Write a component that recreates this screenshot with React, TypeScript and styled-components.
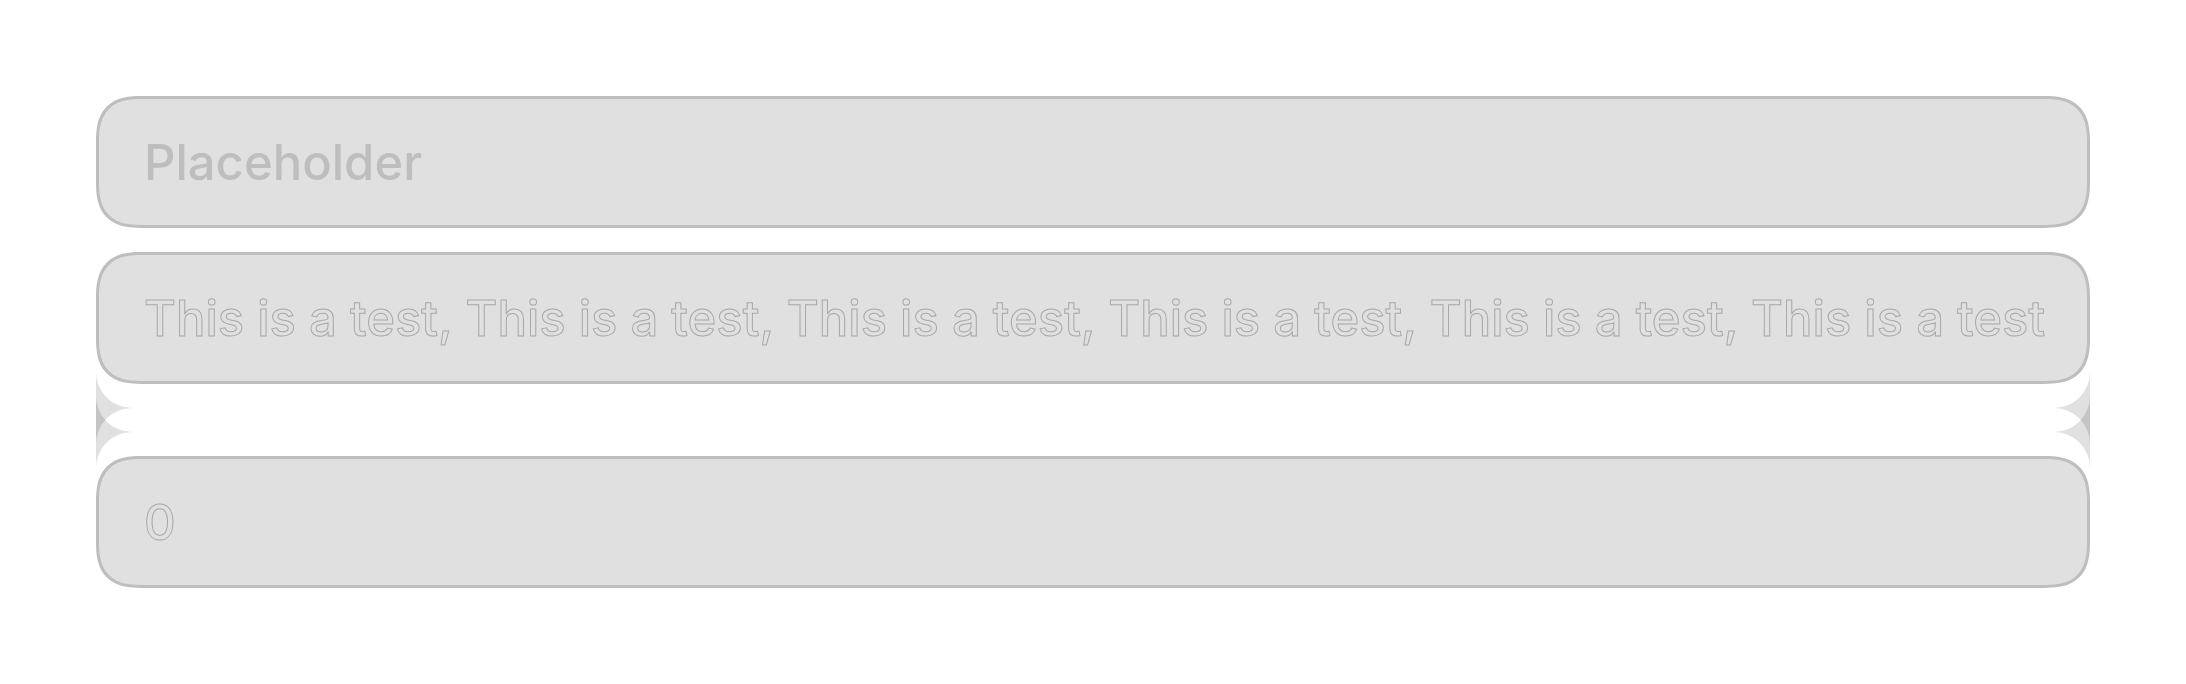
import React from "react";
import styled, { createGlobalStyle, css } from "styled-components";

const GlobalStyle = createGlobalStyle`
  *, *::before, *::after { box-sizing: border-box; }
  body {
    margin: 0;
    background: #ffffff;
    font-family: Inter, "Liberation Sans", sans-serif;
  }
`;

const Form = styled.form`
  display: flex;
  flex-direction: column;
  padding: 96px;
`;

const FieldGroup = styled.div`
  display: flex;
  flex-direction: column;
  gap: 24px;
`;

const TextField = styled.input<{ $outlined?: boolean }>`
  width: 100%;
  height: 132px;
  padding: 0 40px 0 45px;
  border: 3px solid #bebebe;
  border-radius: 38px;
  outline: none;
  background: #e0e0e0;
  color: #e0e0e0;
  font-family: inherit;
  font-size: 49px;
  font-weight: 500;

  @supports (corner-shape: squircle) {
    border-radius: 46px;
    corner-shape: superellipse(1.4);
  }

  &::placeholder {
    color: #bebebe;
    opacity: 1;
  }

  ${({ $outlined }) =>
    $outlined &&
    css`
      font-weight: 470;
      -webkit-text-stroke: 1px #a8a8a8;
    `}
`;

const Divider = styled.div`
  display: flex;
  justify-content: space-between;
  margin: -12px 0;
  pointer-events: none;
`;

const CornerArt = styled.svg<{ $flip?: boolean }>`
  display: block;
  width: 36px;
  height: 96px;
  transform: ${({ $flip }) => ($flip ? "scaleX(-1)" : "none")};
`;

const Corner = ({ flip }: { flip?: boolean }) => (
  <CornerArt $flip={flip} viewBox="0 0 36 96" fill="#000000" fillOpacity={0.122} aria-hidden="true">
    <path d="M0 0A36 36 0 0 0 36 36A36 36 0 0 0 0 72Z" />
    <path d="M0 24A36 36 0 0 0 36 60A36 36 0 0 0 0 96Z" />
  </CornerArt>
);

export default function App() {
  return (
    <>
      <GlobalStyle />
      <Form>
        <FieldGroup>
          <TextField type="text" aria-label="Placeholder" placeholder="Placeholder" />
          <TextField
            type="text"
            aria-label="Text"
            $outlined
            defaultValue="This is a test, This is a test, This is a test, This is a test, This is a test, This is a test"
          />
        </FieldGroup>
        <Divider>
          <Corner />
          <Corner flip />
        </Divider>
        <TextField type="text" inputMode="numeric" aria-label="Number" $outlined defaultValue="0" />
      </Form>
    </>
  );
}
